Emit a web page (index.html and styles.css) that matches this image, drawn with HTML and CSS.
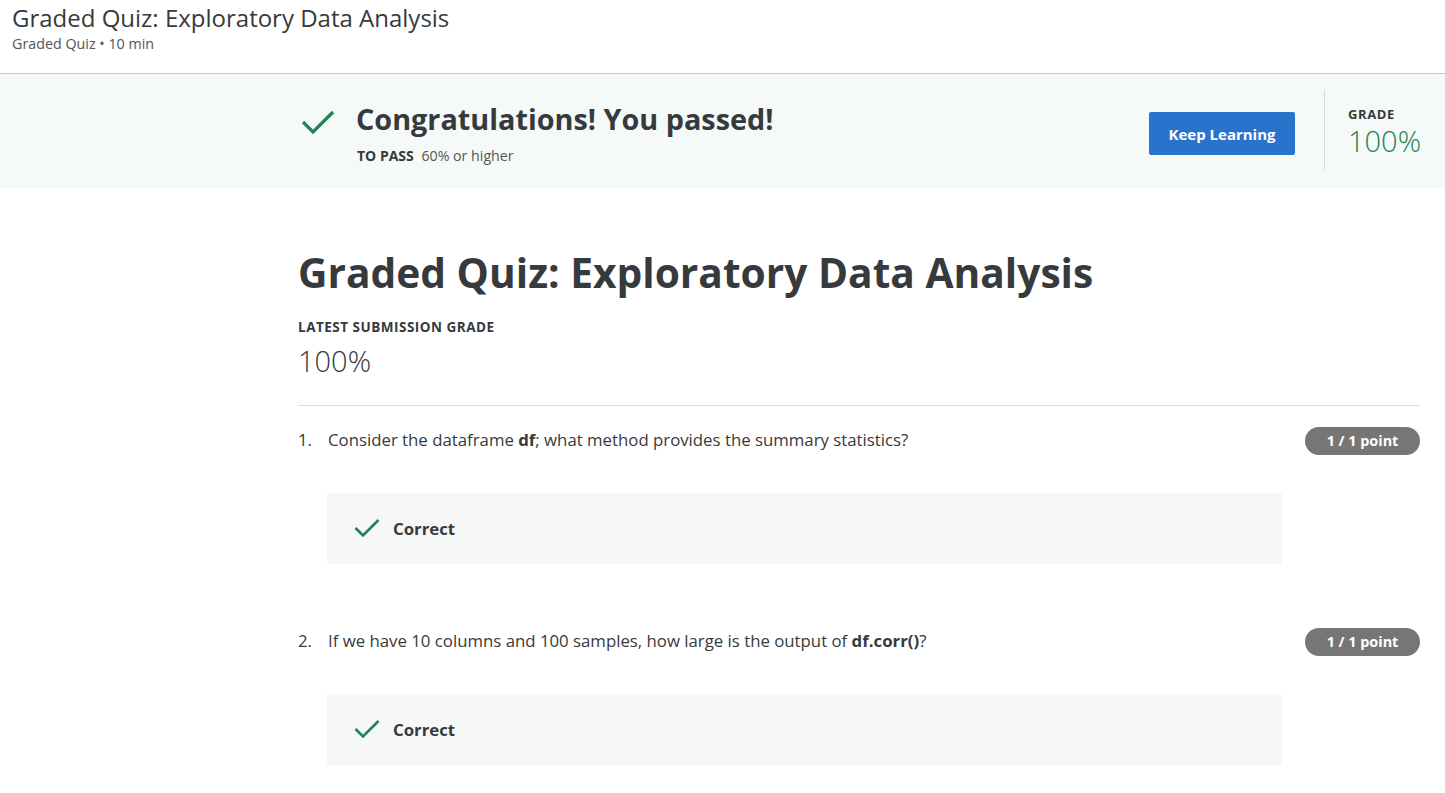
FILE: index.html
```html
<!DOCTYPE html>
<html>
<head>
<meta charset="utf-8">
<link rel="stylesheet" href="styles.css">
</head>
<body>
<header class="top">
  <div class="top-title">Graded Quiz: Exploratory Data Analysis</div>
  <div class="top-sub">Graded Quiz • 10 min</div>
</header>
<section class="banner">
  <div class="banner-inner">
    <div class="pass">
      <svg class="pass-check" width="34" height="26" viewBox="0 0 34 26"><path d="M2 13 L12 23 L32 3" fill="none" stroke="#1f8354" stroke-width="3.2"/></svg>
      <div>
        <div class="pass-title">Congratulations! You passed!</div>
        <div class="pass-sub"><span class="pass-label">TO PASS</span> 60% or higher</div>
      </div>
    </div>
    <div class="banner-right">
      <button class="btn">Keep Learning</button>
      <div class="grade">
        <div class="grade-label">GRADE</div>
        <div class="grade-value">100%</div>
      </div>
    </div>
  </div>
</section>
<main class="main">
  <h1 class="title">Graded Quiz: Exploratory Data Analysis</h1>
  <div class="latest-label">LATEST SUBMISSION GRADE</div>
  <div class="latest-value">100%</div>
  <hr class="rule">
  <div class="question">
    <div class="q-row">
      <span class="q-num">1.</span>
      <span class="q-text">Consider the dataframe <b>df</b>; what method provides the summary statistics?</span>
      <span class="badge">1 / 1 point</span>
    </div>
    <div class="feedback">
      <svg width="26" height="22" viewBox="0 0 26 22"><path d="M1.5 11 L9 18.5 L24.5 3" fill="none" stroke="#1f8354" stroke-width="2.6"/></svg>
      <span class="correct">Correct</span>
    </div>
  </div>
  <div class="question">
    <div class="q-row">
      <span class="q-num">2.</span>
      <span class="q-text">If we have 10 columns and 100 samples, how large is the output of <b>df.corr()</b>?</span>
      <span class="badge">1 / 1 point</span>
    </div>
    <div class="feedback">
      <svg width="26" height="22" viewBox="0 0 26 22"><path d="M1.5 11 L9 18.5 L24.5 3" fill="none" stroke="#1f8354" stroke-width="2.6"/></svg>
      <span class="correct">Correct</span>
    </div>
  </div>
</main>
</body>
</html>
```
FILE: styles.css
```css
* { box-sizing: border-box; }
html, body { margin: 0; padding: 0; background: #fff; }
body { font-family: "Open Sans", "Liberation Sans", sans-serif; color: #373a3c; }

.top { height: 74px; padding: 2px 12px 0; border-bottom: 1px solid #c8c8c8; }
.top-title { font-size: 24px; line-height: 32px; color: #373a3c; }
.top-sub { font-size: 14.3px; line-height: 20px; color: #555; }

.banner { background: #f5f9f8; height: 114px; padding: 16px 25px 0 298px; }
.banner-inner { display: flex; justify-content: space-between; }
.pass { display: flex; align-items: flex-start; padding-top: 11px; }
.pass-check { margin: 8px 21px 0 3px; }
.pass-title { font-size: 28.8px; font-weight: 700; line-height: 36px; color: #373a3c; }
.pass-sub { font-size: 14.2px; line-height: 20px; margin-top: 9px; padding-left: 1px; color: #555; }
.pass-label { font-size: 14px; font-weight: 700; color: #373a3c; margin-right: 4px; }

.banner-right { display: flex; align-items: flex-start; }
.btn { margin-top: 22px; width: 146px; height: 43px; border: 0; border-radius: 2px; background: #2a73cc; color: #fff; font-family: inherit; font-size: 15px; font-weight: 700; }
.grade { margin-left: 29px; border-left: 1px solid #d9d9d9; height: 81px; padding-left: 23px; padding-top: 14px; width: 96px; }
.grade-label { font-size: 13px; font-weight: 700; letter-spacing: 0.6px; line-height: 20px; color: #373a3c; }
.grade-value { font-size: 29px; font-weight: 300; line-height: 34px; color: #1f8354; }

.main { padding: 0 25px 0 298px; }
.title { margin: 0; padding-top: 58px; font-size: 40.7px; font-weight: 700; line-height: 52px; color: #373a3c; }
.latest-label { margin-top: 20px; font-size: 13.5px; font-weight: 700; letter-spacing: 0.5px; line-height: 18px; }
.latest-value { margin-top: 8px; font-size: 29px; font-weight: 300; line-height: 34px; }
.rule { margin: 27px 0 0; border: 0; border-top: 1px solid #dcdcdc; }

.question { padding-top: 19px; height: 201px; }
.q-row { display: flex; align-items: center; height: 28px; font-size: 16.8px; }
.q-num { width: 30px; color: #373a3c; }
.q-text { flex: 1; color: #373a3c; }
.q-text b { font-weight: 700; }
.badge { background: #767676; color: #fff; font-size: 14.4px; font-weight: 700; border-radius: 14px; height: 28px; line-height: 28px; width: 115px; text-align: center; margin-top: 3px; }
.feedback { margin: 40px 138px 0 29px; height: 71px; background: #f5f8f7; display: flex; align-items: center; padding-left: 27px; }
.feedback svg { margin-right: 13px; margin-top: -2px; }
.correct { font-size: 16.8px; font-weight: 700; color: #373a3c; }
```
